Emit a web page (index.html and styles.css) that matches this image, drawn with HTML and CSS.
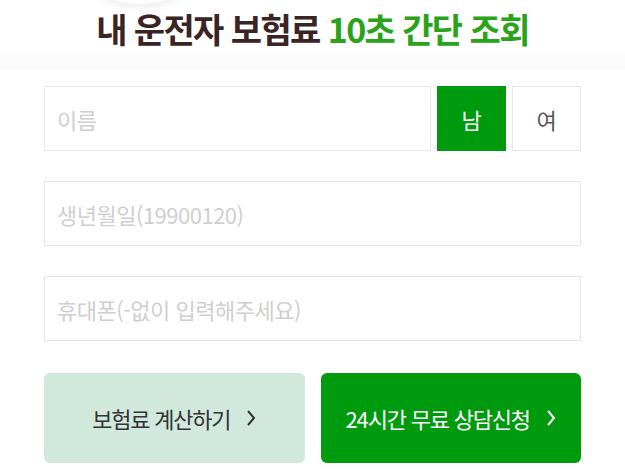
FILE: index.html
```html
<!DOCTYPE html>
<html lang="ko">
<head>
  <meta charset="UTF-8" />
  <title>운전자 보험료 조회</title>
  <link rel="stylesheet" href="styles.css">
</head>
<body>
  <div class="top">
    <div class="blob"></div>
    <h1>내 운전자 보험료 <span class="accent">10초 간단 조회</span></h1>
  </div>
  <div class="form">
    <div class="row">
      <input type="text" class="field" placeholder="이름" />
      <button class="gender on">남</button>
      <button class="gender">여</button>
    </div>
    <input type="text" class="field" placeholder="생년월일(19900120)" />
    <input type="text" class="field" placeholder="휴대폰(-없이 입력해주세요)" />
    <div class="actions">
      <button class="act calc">보험료 계산하기
        <svg class="arrow" viewBox="0 0 10 18"><path d="M2 2l6 7-6 7" /></svg>
      </button>
      <button class="act ask">24시간 무료 상담신청
        <svg class="arrow" viewBox="0 0 10 18"><path d="M2 2l6 7-6 7" /></svg>
      </button>
    </div>
  </div>
</body>
</html>
```

FILE: styles.css
```css
body {
  margin: 0;
  background: #fff;
  font-family: "Noto Sans CJK KR", "Noto Sans", sans-serif;
  overflow: hidden;
}
.top {
  position: relative;
  height: 70px;
  background: linear-gradient(#fff 65%, #fafafa);
  text-align: center;
}
.blob {
  position: absolute;
  left: 100px;
  top: -28px;
  width: 80px;
  height: 32px;
  border-radius: 50%;
  background: #fff;
  box-shadow: 0 3px 8px rgba(0, 0, 0, 0.08);
}
h1 {
  position: relative;
  margin: 0;
  padding-top: 5px;
  font-size: 34px;
  font-weight: 700;
  letter-spacing: -1.6px;
  color: #3b2424;
  line-height: 48px;
}
.accent { color: #2aa31a; }
.form {
  display: flex;
  flex-direction: column;
  gap: 30px;
  padding: 16px 44px 0;
}
.row {
  display: flex;
  gap: 6px;
}
.field {
  box-sizing: border-box;
  width: 100%;
  height: 65px;
  border: 1px solid #e6e6e6;
  padding: 0 12px;
  font-family: inherit;
  font-size: 22px;
  letter-spacing: -0.5px;
  color: #333;
  outline: none;
}
.row .field { flex: 1; width: auto; }
.field::placeholder { color: #cfcfcf; }
.gender {
  box-sizing: border-box;
  width: 69px;
  height: 65px;
  border: 1px solid #e6e6e6;
  background: #fff;
  font-family: inherit;
  font-size: 22px;
  color: #555;
}
.gender.on {
  background: #009a0e;
  border-color: #009a0e;
  color: #fff;
}
.actions {
  display: flex;
  gap: 16px;
  margin-top: 2px;
}
.act {
  flex: 1;
  display: flex;
  align-items: center;
  justify-content: center;
  height: 90px;
  border: none;
  border-radius: 6px;
  font-family: inherit;
  font-size: 22px;
  letter-spacing: -1.2px;
}
.calc { background: #d1e8dc; color: #333; }
.ask { background: #009a0e; color: #fff; }
.arrow {
  width: 10px;
  height: 18px;
  margin-left: 16px;
  fill: none;
  stroke: currentColor;
  stroke-width: 2;
}
```
